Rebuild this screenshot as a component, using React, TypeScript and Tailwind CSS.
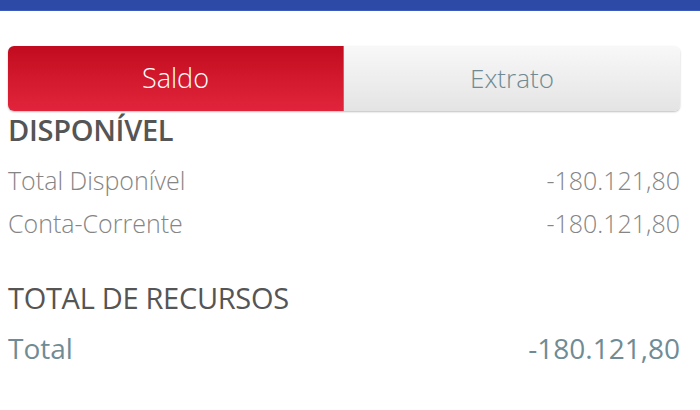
export default function App() {
  const rows = [
    { label: "Total Disponível", value: "-180.121,80" },
    { label: "Conta-Corrente", value: "-180.121,80" },
  ]

  return (
    <div className="w-[700px] h-[410px] bg-white overflow-hidden font-['Open_Sans',sans-serif]">
      {/* Top bar */}
      <div className="h-[11px] bg-[#2d4aa6] border-b border-[#3d5bb8]" />

      {/* Tabs */}
      <div className="mt-[35px] mx-[8px] w-[672px] h-[65px] flex rounded-[6px] shadow-[0_1px_2px_rgba(0,0,0,0.25)] overflow-hidden">
        <button className="w-[336px] h-full flex items-center justify-center bg-gradient-to-b from-[#c20a1e] to-[#e2243b] text-white text-[27px] font-light border-r border-[#d85a68]">
          Saldo
        </button>
        <button className="flex-1 h-full flex items-center justify-center bg-gradient-to-b from-[#f8f8f8] to-[#e4e4e4] text-[#6f8a93] text-[26px] font-light">
          Extrato
        </button>
      </div>

      {/* Disponível */}
      <div className="px-[8px] pr-[20px]">
        <h2 className="mt-[4px] text-[29px] leading-[30px] font-semibold text-[#555555] tracking-[-0.3px]">DISPONÍVEL</h2>
        <div className="mt-[21px] flex flex-col gap-[13px]">
          {rows.map((r) => (
            <div key={r.label} className="flex justify-between items-center h-[30px] text-[25px] font-light text-[#858585]">
              <span>{r.label}</span>
              <span>{r.value}</span>
            </div>
          ))}
        </div>

        {/* Total de recursos */}
        <h2 className="mt-[44px] text-[29px] leading-[30px] font-medium text-[#555555] tracking-[-0.3px]">TOTAL DE RECURSOS</h2>
        <div className="mt-[20px] flex justify-between items-center h-[30px] text-[28px] font-normal text-[#6f8c96]">
          <span>Total</span>
          <span>-180.121,80</span>
        </div>
      </div>
    </div>
  )
}
